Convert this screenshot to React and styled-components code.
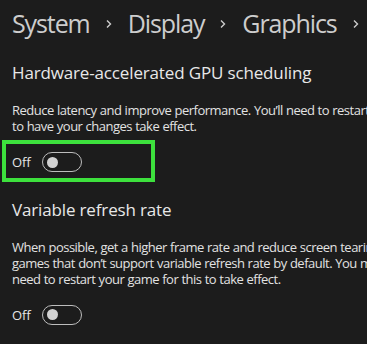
import React from "react";
import styled, { createGlobalStyle } from "styled-components";

const Global = createGlobalStyle`
  html, body { margin: 0; padding: 0; background: #1c1c1c; overflow: hidden; }
  body { font-family: "Open Sans", "Noto Sans", sans-serif; }
`;

const Page = styled.div`
  width: 367px;
  height: 344px;
  box-sizing: border-box;
  padding: 8px 0 0 12px;
  display: flex;
  flex-direction: column;
  overflow: hidden;
  white-space: nowrap;
`;

const Breadcrumb = styled.div`
  display: flex;
  align-items: center;
  gap: 15px;
  height: 30px;
  font-size: 25px;
  line-height: 30px;
  letter-spacing: -1.1px;
  color: #cdcdcd;
`;

const Crumb = styled.span``;

const Chevron = styled.svg`
  width: 8px;
  height: 10px;
  margin-top: 2px;
`;

const Title = styled.div`
  margin-top: ${(p) => p.$mt}px;
  font-size: 17px;
  line-height: 22px;
  font-weight: 500;
  letter-spacing: -0.15px;
  color: #e8e8e8;
`;

const Desc = styled.div`
  margin-top: 17.5px;
  font-size: 13px;
  line-height: 16px;
  letter-spacing: -0.5px;
  word-spacing: 0.3px;
  color: #e2e2e2;
`;

const Highlight = styled.div`
  margin: 6px 0 0 -10px;
  width: 153px;
  height: 42px;
  box-sizing: border-box;
  border: 4px solid #3de13d;
  padding: 3px 0 0 6px;
  display: flex;
  align-items: center;
`;

const ToggleRow = styled.div`
  display: flex;
  align-items: center;
  gap: 12px;
  height: 20px;
  margin-top: ${(p) => p.$mt || 0}px;
`;

const Label = styled.span`
  font-size: 13px;
  line-height: 16px;
  color: #e6e6e6;
  width: 18px;
`;

const Track = styled.div`
  width: 40px;
  height: 20px;
  box-sizing: border-box;
  border: 1px solid #bdbdbd;
  border-radius: 10px;
  display: flex;
  align-items: center;
  padding-left: 4px;
`;

const Knob = styled.div`
  width: 11px;
  height: 11px;
  border-radius: 50%;
  background: #d2d2d2;
`;

const Chev = () => (
  <Chevron viewBox="0 0 8 10">
    <path d="M2 1.5 L5.5 5 L2 8.5" fill="none" stroke="#cdcdcd" strokeWidth="1.4" />
  </Chevron>
);

const Toggle = ({ mt }) => (
  <ToggleRow $mt={mt}>
    <Label>Off</Label>
    <Track>
      <Knob />
    </Track>
  </ToggleRow>
);

export default function App() {
  return (
    <>
      <Global />
      <Page>
        <Breadcrumb>
          <Crumb>System</Crumb>
          <Chev />
          <Crumb>Display</Crumb>
          <Chev />
          <Crumb>Graphics</Crumb>
          <Chev />
        </Breadcrumb>
        <Title $mt={24}>Hardware-accelerated GPU scheduling</Title>
        <Desc>
          Reduce latency and improve performance. You’ll need to restart your PC
          <br />
          to have your changes take effect.
        </Desc>
        <Highlight>
          <Toggle />
        </Highlight>
        <Title $mt={17.5}>Variable refresh rate</Title>
        <Desc>
          When possible, get a higher frame rate and reduce screen tearing in
          <br />
          games that don’t support variable refresh rate by default. You might
          <br />
          need to restart your game for this to take effect.
        </Desc>
        <Toggle mt={18} />
      </Page>
    </>
  );
}
